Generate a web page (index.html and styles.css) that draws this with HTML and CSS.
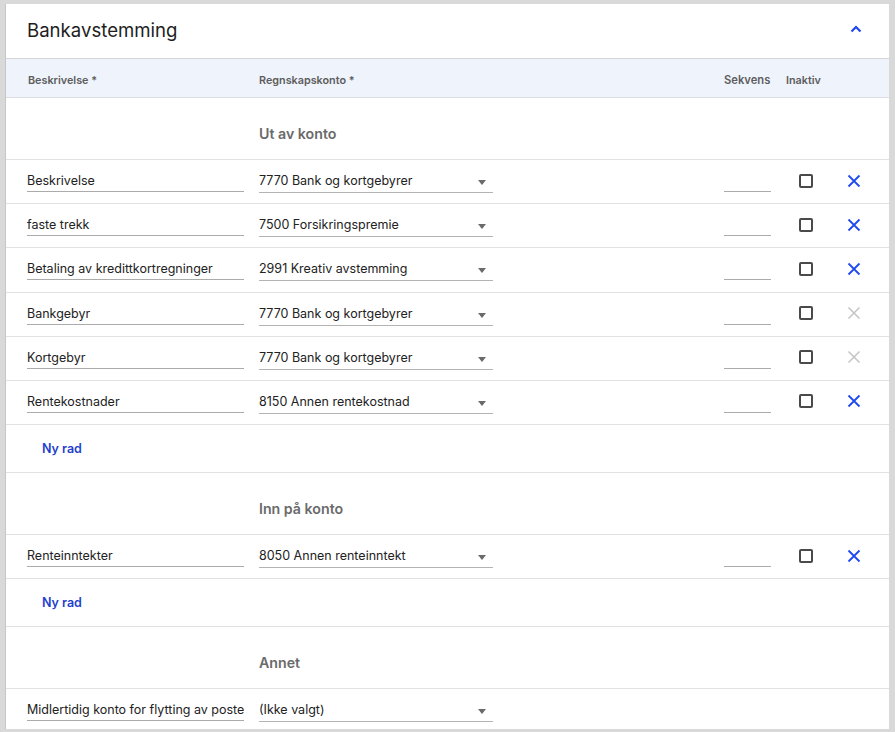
FILE: index.html
```html
<!DOCTYPE html>
<html lang="no">
<head>
<meta charset="utf-8">
<title>Bankavstemming</title>
<link rel="stylesheet" href="styles.css">
</head>
<body>
<div class="card">
  <div class="card-head">
    <h1 class="title">Bankavstemming</h1>
    <svg class="chevron" width="12" height="8" viewBox="0 0 12 8"><path d="M1.5 6.5 L6 2 L10.5 6.5" fill="none" stroke="#1f47f5" stroke-width="2.2"/></svg>
  </div>

  <div class="grid colhead">
    <div>Beskrivelse *</div>
    <div>Regnskapskonto *</div>
    <div></div>
    <div>Sekvens</div>
    <div>Inaktiv</div>
    <div></div>
  </div>

  <div class="grid section"><div></div><div class="section-label">Ut av konto</div></div>

  <div class="grid row">
    <div class="field">Beskrivelse</div>
    <div class="select"><span>7770 Bank og kortgebyrer</span><i class="caret"></i></div>
    <div></div>
    <div class="field seq"></div>
    <div class="cell-center"><span class="checkbox"></span></div>
    <div class="cell-center"><svg class="x" width="14" height="14" viewBox="0 0 14 14"><path d="M1.5 1.5 L12.5 12.5 M12.5 1.5 L1.5 12.5" stroke="currentColor" stroke-width="1.8"/></svg></div>
  </div>
  <div class="grid row">
    <div class="field">faste trekk</div>
    <div class="select"><span>7500 Forsikringspremie</span><i class="caret"></i></div>
    <div></div>
    <div class="field seq"></div>
    <div class="cell-center"><span class="checkbox"></span></div>
    <div class="cell-center"><svg class="x" width="14" height="14" viewBox="0 0 14 14"><path d="M1.5 1.5 L12.5 12.5 M12.5 1.5 L1.5 12.5" stroke="currentColor" stroke-width="1.8"/></svg></div>
  </div>
  <div class="grid row">
    <div class="field">Betaling av kredittkortregninger</div>
    <div class="select"><span>2991 Kreativ avstemming</span><i class="caret"></i></div>
    <div></div>
    <div class="field seq"></div>
    <div class="cell-center"><span class="checkbox"></span></div>
    <div class="cell-center"><svg class="x" width="14" height="14" viewBox="0 0 14 14"><path d="M1.5 1.5 L12.5 12.5 M12.5 1.5 L1.5 12.5" stroke="currentColor" stroke-width="1.8"/></svg></div>
  </div>
  <div class="grid row">
    <div class="field">Bankgebyr</div>
    <div class="select"><span>7770 Bank og kortgebyrer</span><i class="caret"></i></div>
    <div></div>
    <div class="field seq"></div>
    <div class="cell-center"><span class="checkbox"></span></div>
    <div class="cell-center"><svg class="x disabled" width="14" height="14" viewBox="0 0 14 14"><path d="M1.5 1.5 L12.5 12.5 M12.5 1.5 L1.5 12.5" stroke="currentColor" stroke-width="1.5"/></svg></div>
  </div>
  <div class="grid row">
    <div class="field">Kortgebyr</div>
    <div class="select"><span>7770 Bank og kortgebyrer</span><i class="caret"></i></div>
    <div></div>
    <div class="field seq"></div>
    <div class="cell-center"><span class="checkbox"></span></div>
    <div class="cell-center"><svg class="x disabled" width="14" height="14" viewBox="0 0 14 14"><path d="M1.5 1.5 L12.5 12.5 M12.5 1.5 L1.5 12.5" stroke="currentColor" stroke-width="1.5"/></svg></div>
  </div>
  <div class="grid row">
    <div class="field">Rentekostnader</div>
    <div class="select"><span>8150 Annen rentekostnad</span><i class="caret"></i></div>
    <div></div>
    <div class="field seq"></div>
    <div class="cell-center"><span class="checkbox"></span></div>
    <div class="cell-center"><svg class="x" width="14" height="14" viewBox="0 0 14 14"><path d="M1.5 1.5 L12.5 12.5 M12.5 1.5 L1.5 12.5" stroke="currentColor" stroke-width="1.8"/></svg></div>
  </div>
  <div class="newrow"><a class="link">Ny rad</a></div>

  <div class="grid section"><div></div><div class="section-label">Inn på konto</div></div>
  <div class="grid row">
    <div class="field">Renteinntekter</div>
    <div class="select"><span>8050 Annen renteinntekt</span><i class="caret"></i></div>
    <div></div>
    <div class="field seq"></div>
    <div class="cell-center"><span class="checkbox"></span></div>
    <div class="cell-center"><svg class="x" width="14" height="14" viewBox="0 0 14 14"><path d="M1.5 1.5 L12.5 12.5 M12.5 1.5 L1.5 12.5" stroke="currentColor" stroke-width="1.8"/></svg></div>
  </div>
  <div class="newrow"><a class="link">Ny rad</a></div>

  <div class="grid section"><div></div><div class="section-label">Annet</div></div>
  <div class="grid row last">
    <div class="field">Midlertidig konto for flytting av poster</div>
    <div class="select"><span>(Ikke valgt)</span><i class="caret"></i></div>
  </div>
</div>
</body>
</html>
```

FILE: styles.css
```css
* { box-sizing: border-box; }
html, body { height: 100%; }
body {
  margin: 0;
  padding: 4px 6px 3px 5px;
  background: #d9d9d9;
  overflow: hidden;
  font-family: Inter, Roboto, "Liberation Sans", sans-serif;
  color: #222;
}
.card {
  height: 100%;
  background: #fff;
  border-left: 1px solid #c6c6c6;
  overflow: hidden;
}
.card-head {
  height: 55px;
  border-bottom: 1px solid #d4d4d4;
  display: flex;
  align-items: center;
  justify-content: space-between;
  padding: 0 27px 3px 21px;
}
.title {
  margin: 0;
  font-size: 18.6px;
  font-weight: 400;
  color: #1e1e1e;
}
.chevron { display: block; margin-top: -1px; }

.grid {
  display: grid;
  grid-template-columns: 217px 234px 1fr 47px 40px 25px;
  column-gap: 15px;
  padding: 0 23px 0 21px;
}
.colhead {
  height: 39px;
  background: #eff3fc;
  border-bottom: 1px solid #dadde3;
  padding-top: 15px;
  font-size: 10.8px;
  font-weight: 600;
  color: #5d5d5d;
  line-height: 13px;
}
.colhead > div:first-child { padding-left: 1px; }
.colhead > div:nth-child(4) { font-size: 11.2px; }
.section {
  height: 62px;
  border-bottom: 1px solid #e2e2e2;
  padding-top: 28px;
}
.section-label {
  font-size: 14.2px;
  font-weight: 600;
  color: #6a6a6a;
  line-height: 16px;
}
.row {
  height: 44.2px;
  border-bottom: 1px solid #e2e2e2;
  padding-top: 10px;
  align-items: start;
}
.field {
  height: 22px;
  border-bottom: 1px solid #ababab;
  font-size: 12.5px;
  line-height: 21px;
  white-space: nowrap;
  overflow: hidden;
}
.select {
  height: 23px;
  border-bottom: 1px solid #b3b3b3;
  font-size: 12.5px;
  line-height: 21px;
  display: flex;
  justify-content: space-between;
  align-items: center;
  white-space: nowrap;
  padding-right: 7px;
}
.select span { align-self: flex-start; }
.caret {
  width: 0; height: 0;
  border-left: 4.5px solid transparent;
  border-right: 4.5px solid transparent;
  border-top: 5px solid #6a6a6a;
  margin-top: 3px;
}
.cell-center {
  display: flex;
  justify-content: center;
  align-items: center;
  height: 21px;
}
.checkbox {
  width: 14px; height: 14px;
  border: 2px solid #4a4a4a;
  border-radius: 2px;
  display: block;
}
.x { display: block; color: #1f4af2; }
.x.disabled { color: #c4c4c4; }
.newrow {
  height: 48px;
  border-bottom: 1px solid #e2e2e2;
  display: flex;
  align-items: center;
  padding-left: 36px;
}
.link {
  font-size: 12.5px;
  font-weight: 600;
  color: #1f3fcc;
  cursor: pointer;
}
.row.last { border-bottom: none; }
```
